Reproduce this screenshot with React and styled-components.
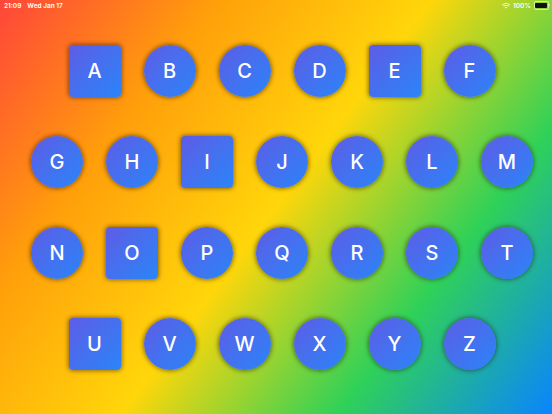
import React from 'react';
import styled, { createGlobalStyle } from 'styled-components';

const GlobalStyle = createGlobalStyle`
  html, body {
    margin: 0;
    padding: 0;
  }
  body {
    font-family: "Inter", "Roboto", "Liberation Sans", sans-serif;
  }
`;

const Page = styled.div`
  width: 552px;
  height: 414px;
  overflow: hidden;
  background: linear-gradient(
    126.87deg,
    #ff453a 0%,
    #ff9f0a 25%,
    #ffd60a 50%,
    #30d158 75%,
    #0a84ff 100%
  );
  display: flex;
  flex-direction: column;
`;

const StatusBar = styled.div`
  height: 11px;
  display: flex;
  align-items: center;
  justify-content: space-between;
  padding: 0 3px 0 4px;
  color: #fff;
  font-size: 6.5px;
  font-weight: 600;
`;

const Side = styled.div`
  display: flex;
  align-items: center;
  gap: ${(p) => p.$gap || 6}px;
`;

const Battery = styled.div`
  width: 12px;
  height: 5px;
  border: 0.6px solid rgba(255, 255, 255, 0.6);
  border-radius: 1.5px;
  padding: 0.6px;
  position: relative;
  &::before {
    content: '';
    display: block;
    width: 100%;
    height: 100%;
    background: #111;
    border-radius: 1px;
  }
  &::after {
    content: '';
    position: absolute;
    right: -2px;
    top: 1.5px;
    width: 1px;
    height: 2px;
    background: rgba(255, 255, 255, 0.6);
    border-radius: 0 1px 1px 0;
  }
`;

const Board = styled.div`
  display: flex;
  flex-direction: column;
  align-items: center;
  gap: 39px;
  padding-top: 34px;
  padding-left: 12px;
`;

const Row = styled.div`
  display: flex;
  gap: 23px;
`;

const Key = styled.button`
  width: 52px;
  height: 52px;
  border: none;
  padding: 0;
  border-radius: ${(p) => (p.$square ? '4px' : '50%')};
  background: linear-gradient(135deg, #5e5ce6 0%, #2a85f8 100%);
  box-shadow: 0 0 4px 1px rgba(40, 20, 0, 0.5);
  color: #fff;
  font-family: "Inter", "Roboto", "Liberation Sans", sans-serif;
  font-size: 20px;
  font-weight: 500;
  display: flex;
  align-items: center;
  justify-content: center;
  cursor: pointer;
`;

const rows = [
  ['A', 'B', 'C', 'D', 'E', 'F'],
  ['G', 'H', 'I', 'J', 'K', 'L', 'M'],
  ['N', 'O', 'P', 'Q', 'R', 'S', 'T'],
  ['U', 'V', 'W', 'X', 'Y', 'Z'],
];

const vowels = 'AEIOU';

function Wifi() {
  return (
    <svg width="8" height="6" viewBox="0 0 16 12">
      <path d="M8 2.2c2.6 0 5 1 6.8 2.7l1.2-1.2C13.9 1.6 11.1.5 8 .5S2.1 1.6 0 3.7l1.2 1.2C3 3.2 5.4 2.2 8 2.2z" fill="#fff" />
      <path d="M8 5.6c1.6 0 3.1.6 4.3 1.7l1.2-1.2C12 4.7 10.1 3.9 8 3.9S4 4.7 2.5 6.1l1.2 1.2C4.9 6.2 6.4 5.6 8 5.6z" fill="#fff" />
      <path d="M8 9l2-2c-.6-.5-1.3-.8-2-.8s-1.4.3-2 .8z" fill="#fff" transform="translate(0 2)" />
    </svg>
  );
}

export default function App() {
  return (
    <>
      <GlobalStyle />
      <Page>
        <StatusBar>
          <Side $gap={6}>
            <span>21:09</span>
            <span>Wed Jan 17</span>
          </Side>
          <Side $gap={3}>
            <Wifi />
            <span>100%</span>
            <Battery />
          </Side>
        </StatusBar>
        <Board>
          {rows.map((row, i) => (
            <Row key={i}>
              {row.map((l) => (
                <Key key={l} $square={vowels.includes(l)}>
                  {l}
                </Key>
              ))}
            </Row>
          ))}
        </Board>
      </Page>
    </>
  );
}
